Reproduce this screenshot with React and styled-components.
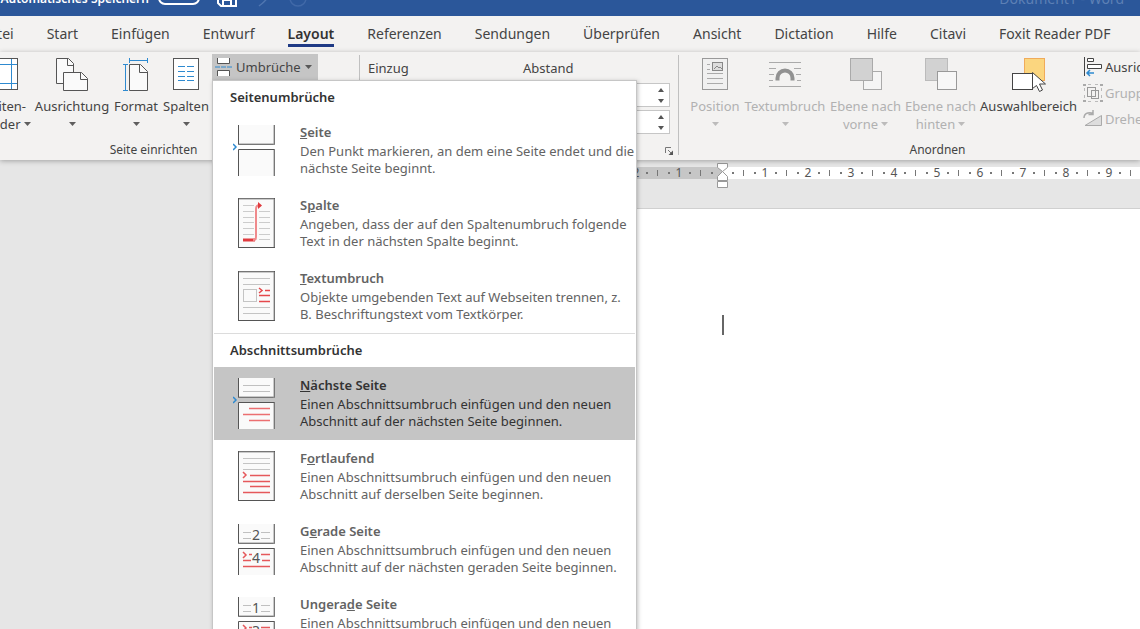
import { useState } from "react";
import styled, { createGlobalStyle } from "styled-components";

const GlobalStyle = createGlobalStyle`
  * {
    box-sizing: border-box;
  }
  body {
    margin: 0;
    font-family: "Noto Sans", "Open Sans", sans-serif;
    font-size: 13px;
    color: #444444;
  }
  button, input {
    font: inherit;
    color: inherit;
  }
`;

const tabs = [
  "Datei",
  "Start",
  "Einfügen",
  "Entwurf",
  "Layout",
  "Referenzen",
  "Sendungen",
  "Überprüfen",
  "Ansicht",
  "Dictation",
  "Hilfe",
  "Citavi",
  "Foxit Reader PDF",
];

// key = index of the underlined access letter
const pageBreaks = [
  {
    name: "Seite",
    key: 0,
    icon: "page",
    text: "Den Punkt markieren, an dem eine Seite endet und die nächste Seite beginnt.",
  },
  {
    name: "Spalte",
    key: 1,
    icon: "column",
    text: "Angeben, dass der auf den Spaltenumbruch folgende Text in der nächsten Spalte beginnt.",
  },
  {
    name: "Textumbruch",
    key: 0,
    icon: "wrap",
    text: "Objekte umgebenden Text auf Webseiten trennen, z. B. Beschriftungstext vom Textkörper.",
  },
];

const sectionBreaks = [
  {
    name: "Nächste Seite",
    key: 0,
    icon: "next",
    text: "Einen Abschnittsumbruch einfügen und den neuen Abschnitt auf der nächsten Seite beginnen.",
  },
  {
    name: "Fortlaufend",
    key: 1,
    icon: "continuous",
    text: "Einen Abschnittsumbruch einfügen und den neuen Abschnitt auf derselben Seite beginnen.",
  },
  {
    name: "Gerade Seite",
    key: 1,
    icon: "even",
    text: "Einen Abschnittsumbruch einfügen und den neuen Abschnitt auf der nächsten geraden Seite beginnen.",
  },
  {
    name: "Ungerade Seite",
    key: 6,
    icon: "odd",
    text: "Einen Abschnittsumbruch einfügen und den neuen Abschnitt auf der nächsten ungeraden Seite beginnen.",
  },
];

/* ---------- icons ---------- */

const Svg = ({ w, h, children }) => (
  <svg width={w} height={h} viewBox={`0 0 ${w} ${h}`} fill="none" aria-hidden="true">
    {children}
  </svg>
);

const Caret = () => (
  <Svg w={7} h={4}>
    <path d="M0 0h7L3.5 4z" fill="currentColor" opacity="0.85" />
  </Svg>
);

const MarginsIcon = () => (
  <Svg w={26} h={32}>
    <rect x="0.5" y="0.5" width="25" height="31" fill="#fff" stroke="#555" />
    <path d="M6.5 1v30M19.5 1v30M1 6.5h24M1 25.5h24" stroke="#2e8ad0" />
  </Svg>
);

const OrientationIcon = () => (
  <Svg w={33} h={33}>
    <path d="M7 25.5H.5V.5h12l5 5V14" fill="#fafafa" stroke="#555" />
    <path d="M11.5 1v6.5h6" stroke="#555" />
    <path d="M7.5 14.5h18l6 6v12h-24z" fill="#fafafa" stroke="#555" />
    <path d="M24.5 15v6.5h7" stroke="#555" />
  </Svg>
);

const SizeIcon = () => (
  <Svg w={26} h={33}>
    <path d="M6.5 2.5h18M6.5 0v5M24.5 0v5M2.5 6.5v26M0 6.5h5M0 32.5h5" stroke="#2e8ad0" />
    <path d="M6.5 6.5h11l7 7v19h-18z" fill="#fafafa" stroke="#555" />
    <path d="M16.5 7v7.500h8" stroke="#555" />
  </Svg>
);

const ColumnsIcon = () => (
  <Svg w={26} h={32}>
    <rect x="0.5" y="0.5" width="25" height="31" fill="#fff" stroke="#555" />
    <path
      d="M5 8.5h7M14 8.5h7M5 13.5h7M14 13.5h7M5 18.5h7M14 18.5h7M5 22.5h7M14 22.5h7"
      stroke="#2e8ad0"
    />
  </Svg>
);

const BreaksIcon = () => (
  <Svg w={17} h={18}>
    <path d="M2.5 0v5.5h12V0M2.5 18v-5.5h12V18" fill="#fff" stroke="#555" />
    <path d="M0 9h5M6 9h5M12 9h5" stroke="#2e8ad0" />
  </Svg>
);

const PositionIcon = () => (
  <Svg w={26} h={32}>
    <rect x="0.5" y="0.5" width="25" height="31" fill="#f0f0f0" stroke="#999" />
    <rect x="10.5" y="4.5" width="10" height="8" fill="#ddd" stroke="#888" />
    <path d="M12 11l3-3 2 2 1-1 2 2" stroke="#888" />
    <path d="M5 6.5h3M5 11.5h3M5 15.5h16M5 20.5h16M5 25.5h16" stroke="#aaa" />
  </Svg>
);

const TextWrapIcon = () => (
  <Svg w={32} h={32}>
    <path
      d="M0 4.5h32M0 10.5h7M25 10.5h7M0 16.5h5M27 16.5h5M0 22.5h4M28 22.5h4M0 28.5h32"
      stroke="#aaa"
    />
    <path d="M8.5 22.5v-2.500a7.500 7.500 0 0 1 15 0v2.500" stroke="#919191" strokeWidth="4" />
  </Svg>
);

const ForwardIcon = () => (
  <Svg w={32} h={32}>
    <rect x="13.5" y="13.5" width="18" height="18" fill="#f5f5f5" stroke="#aaa" />
    <rect x="0.5" y="0.5" width="22" height="22" fill="#d2d2d2" stroke="#aaa" />
  </Svg>
);

const BackwardIcon = () => (
  <Svg w={32} h={32}>
    <rect x="0.5" y="0.5" width="22" height="22" fill="#d2d2d2" stroke="#bbb" />
    <rect x="12.5" y="13.5" width="19" height="18" fill="#f7f7f7" stroke="#999" />
  </Svg>
);

const SelectionIcon = () => (
  <Svg w={34} h={34}>
    <rect x="12.5" y="0.5" width="20" height="22" fill="#fbd67f" stroke="#f0ab5a" />
    <rect x="0.5" y="15.5" width="20" height="16" fill="#fff" stroke="#444" />
    <path d="M20.5 14.5v16l4-3 3 6 3-1.5-3-6h6z" fill="#fff" stroke="#444" />
  </Svg>
);

const AlignIcon = () => (
  <Svg w={20} h={20}>
    <path d="M1.5 0v19" stroke="#444" />
    <path d="M4.5 1.5h6v3h-6zM4.5 7.5h14v4h-14z" fill="#fff" stroke="#444" />
    <path d="M4 16h7M7 13l-3 3 3 3" stroke="#2e8ad0" strokeWidth="1.5" />
  </Svg>
);

const GroupIcon = () => (
  <Svg w={20} h={20}>
    <path d="M5 1.5h3M12 1.5h3M5 18.5h3M12 18.5h3M1.5 5v3M1.5 12v3M18.5 5v3M18.5 12v3" stroke="#bbb" />
    <path d="M0 1h3v2H0zM17 1h3v2h-3zM0 17h3v2H0zM17 17h3v2h-3z" fill="#aaa" />
    <rect x="4.5" y="4.5" width="8" height="9" stroke="#999" />
    <rect x="8.5" y="7.5" width="7" height="8" stroke="#999" />
  </Svg>
);

const RotateIcon = () => (
  <Svg w={20} h={20}>
    <path d="M1 9c0-6 7-6 9-4M10 1v4.5H5.5" stroke="#aaa" strokeWidth="1.5" />
    <path d="M18.5 6.5v10H2z" fill="#ddd" stroke="#aaa" />
  </Svg>
);

const LauncherIcon = () => (
  <Svg w={9} h={9}>
    <path d="M.5 6V.5H6M3 3l4 4" stroke="#777" />
    <path d="M8 3.5V8H3.5z" fill="#555" />
  </Svg>
);

const SaveIcon = () => (
  <Svg w={20} h={18}>
    <path d="M1 1h18v16H4l-3-3zM5 1v6h10V1M6 17v-6h8v6" stroke="#fff" strokeWidth="2" />
  </Svg>
);

const UndoIcon = () => (
  <Svg w={20} h={18}>
    <path d="M4 3c12-4 16 4 2 14" stroke="#5076b0" strokeWidth="1.5" />
  </Svg>
);

const RedoIcon = () => (
  <Svg w={18} h={18}>
    <circle cx="9" cy="9" r="8" stroke="#4169a8" strokeWidth="1.5" />
  </Svg>
);

const IndentMarker = () => (
  <Svg w={11} h={26}>
    <path d="M.5.5h10v4l-5 4-5-4zM.5 17.5v-4l5-5 5 5v4zM.5 18.5h10v6H.5z" fill="#fff" stroke="#999" />
  </Svg>
);

const SplitPages = ({ children }) => (
  <>
    <path d="M5.5 0v19.5h36V0" fill="#fafafa" stroke="#555" />
    <path d="M5.5 51V24.5h36V51" fill="#fafafa" stroke="#555" />
    <path d="M41 0v20M6 19h35M41 25v26" stroke="#999" />
    {children}
  </>
);

const WholePage = ({ children }) => (
  <>
    <rect x="5.5" y="0.5" width="36" height="49" fill="#fafafa" stroke="#555" />
    <path d="M41 1v48M6 1h35" stroke="#999" />
    {children}
  </>
);

const Digit = styled.text`
  font-size: 14px;
  fill: #555555;
  text-anchor: middle;
`;

const breakIcons = {
  page: (
    <SplitPages>
      <path d="M0 19l3 3-3 3" stroke="#2e8ad0" strokeWidth="1.5" />
    </SplitPages>
  ),
  column: (
    <WholePage>
      <path
        d="M10 7.5h11M10 13.5h11M26 13.5h11M10 19.5h11M26 19.5h11M10 24.5h11M26 24.5h11M10 30.5h11M26 30.5h11M10 36.5h11M26 36.5h11M26 41.5h11"
        stroke="#ccc"
      />
      <path d="M10 42h12" stroke="#e03a3e" strokeWidth="3" />
      <path d="M20 42c3 0 3-1 3-4V11c0-3 1-4 4-4" stroke="#ef8a8c" strokeWidth="2" />
      <path d="M25 4l4 3.5-4 3.5z" fill="#e03a3e" />
    </WholePage>
  ),
  wrap: (
    <WholePage>
      <path d="M10 7.5h27M10 13.5h27M10 36.5h27M10 42.5h27" stroke="#c4c4c4" />
      <rect x="10.5" y="18.5" width="13" height="12" stroke="#c4c4c4" />
      <path d="M26 17l3 2.5-3 2.5M32 19.5h5M26 24.5h11M26 30.5h11" stroke="#e5484b" strokeWidth="1.5" />
    </WholePage>
  ),
  next: (
    <SplitPages>
      <path d="M0 19l3 3-3 3" stroke="#2e8ad0" strokeWidth="1.5" />
      <path d="M10 7.5h27M10 13.5h27" stroke="#c0c0c0" />
      <path d="M16 30.5h21M10 36.5h27M16 42.5h21" stroke="#ec6f71" strokeWidth="1.5" />
    </SplitPages>
  ),
  continuous: (
    <WholePage>
      <path d="M10 7.5h27M10 12.5h27M10 18.5h27" stroke="#c4c4c4" />
      <path
        d="M10 21l3 3-3 3M17 24.5h20M10 30.5h27M17 35.5h20M10 41.5h27"
        stroke="#e5585b"
        strokeWidth="1.5"
      />
    </WholePage>
  ),
  even: (
    <SplitPages>
      <path d="M10 8.5h8M28 8.5h9M10 14.5h8M28 14.5h9" stroke="#c0c0c0" />
      <Digit x="23" y="16">2</Digit>
      <path
        d="M10 28l3 3-3 3M16 30.5h3M28 30.5h9M10 36.5h8M29 36.5h8M10 42.5h27"
        stroke="#e5585b"
        strokeWidth="1.5"
      />
      <Digit x="23" y="39">4</Digit>
    </SplitPages>
  ),
  odd: (
    <SplitPages>
      <path d="M10 8.5h8M28 8.5h9M10 14.5h8M28 14.5h9" stroke="#c0c0c0" />
      <Digit x="23" y="16">1</Digit>
      <path
        d="M10 28l3 3-3 3M16 30.5h3M28 30.5h9M10 36.5h8M29 36.5h8M10 42.5h27"
        stroke="#e5585b"
        strokeWidth="1.5"
      />
      <Digit x="23" y="39">3</Digit>
    </SplitPages>
  ),
};

/* ---------- parts ---------- */

const BigButton = ({ icon, lines, arrow = "below", width, disabled }) => (
  <BigButtonBox type="button" $width={width} disabled={disabled}>
    <IconSlot>{icon}</IconSlot>
    {lines.map((line, i) => (
      <Line key={line}>
        {line}
        {arrow === "inline" && i === lines.length - 1 && <Caret />}
      </Line>
    ))}
    {arrow === "below" && (
      <Line>
        <Caret />
      </Line>
    )}
  </BigButtonBox>
);

const BreakItem = ({ item, active, onHover }) => (
  <MenuItem type="button" role="menuitem" $active={active} onMouseEnter={onHover}>
    <Svg w={48} h={51}>
      {breakIcons[item.icon]}
    </Svg>
    <ItemText>
      <ItemName>
        {item.name.slice(0, item.key)}
        <u>{item.name[item.key]}</u>
        {item.name.slice(item.key + 1)}
      </ItemName>
      <ItemHint>{item.text}</ItemHint>
    </ItemText>
  </MenuItem>
);

const Spinner = ({ label }) => (
  <SpinnerBox>
    <input aria-label={label} />
    <SpinnerArrows>
      <button type="button" aria-label={`${label} erhöhen`}>
        <Svg w={6} h={4}>
          <path d="M0 4h6L3 0z" fill="#555" />
        </Svg>
      </button>
      <button type="button" aria-label={`${label} verringern`}>
        <Svg w={6} h={4}>
          <path d="M0 0h6L3 4z" fill="#555" />
        </Svg>
      </button>
    </SpinnerArrows>
  </SpinnerBox>
);

// one centimetre of the ruler: dot, half mark, dot, number
const RulerUnit = ({ number }) => (
  <Unit>
    <Dot />
    <HalfMark />
    <Dot />
    <span>{number}</span>
  </Unit>
);

function App() {
  const [hovered, setHovered] = useState("Nächste Seite");

  return (
    <Window>
      <GlobalStyle />
      <TitleBar>
        <TitleRow>
          <AutoSave>Automatisches Speichern</AutoSave>
          <Toggle type="button" role="switch" aria-checked="false" aria-label="Automatisches Speichern" />
          <QuickAccess>
            <SaveIcon />
            <UndoIcon />
            <RedoIcon />
          </QuickAccess>
          <DocName>Dokument1 - Word</DocName>
        </TitleRow>
      </TitleBar>

      <TabBar>
        {tabs.map((tab) => (
          <Tab key={tab} href="#" $active={tab === "Layout"}>
            {tab}
          </Tab>
        ))}
      </TabBar>

      <Ribbon>
        <SetupGroup>
          <GroupBody>
            <BigButton icon={<MarginsIcon />} lines={["Seiten-", "ränder"]} arrow="inline" width={58} />
            <BigButton icon={<OrientationIcon />} lines={["Ausrichtung"]} width={76} />
            <BigButton icon={<SizeIcon />} lines={["Format"]} width={52} />
            <BigButton icon={<ColumnsIcon />} lines={["Spalten"]} width={48} />
            <MenuAnchor>
              <BreaksButton type="button" aria-haspopup="menu" aria-expanded="true">
                <BreaksIcon />
                Umbrüche
                <Caret />
              </BreaksButton>
              <Menu role="menu">
                <MenuHeading>Seitenumbrüche</MenuHeading>
                {pageBreaks.map((item) => (
                  <BreakItem
                    key={item.name}
                    item={item}
                    active={hovered === item.name}
                    onHover={() => setHovered(item.name)}
                  />
                ))}
                <MenuLine />
                <MenuHeading>Abschnittsumbrüche</MenuHeading>
                {sectionBreaks.map((item) => (
                  <BreakItem
                    key={item.name}
                    item={item}
                    active={hovered === item.name}
                    onHover={() => setHovered(item.name)}
                  />
                ))}
              </Menu>
            </MenuAnchor>
          </GroupBody>
          <GroupLabel>Seite einrichten</GroupLabel>
        </SetupGroup>
        <Divider />

        <ParagraphGroup>
          <Fields>
            <Field>
              <FieldTitle>Einzug</FieldTitle>
            </Field>
            <Field>
              <FieldTitle>Abstand</FieldTitle>
              <Spinner label="Abstand vor" />
              <Spinner label="Abstand nach" />
            </Field>
          </Fields>
          <Launcher type="button" aria-label="Absatzeinstellungen">
            <LauncherIcon />
          </Launcher>
        </ParagraphGroup>
        <Divider />

        <ArrangeGroup>
          <GroupBody>
            <BigButton icon={<PositionIcon />} lines={["Position"]} width={54} disabled />
            <BigButton icon={<TextWrapIcon />} lines={["Textumbruch"]} width={86} disabled />
            <BigButton icon={<ForwardIcon />} lines={["Ebene nach", "vorne"]} arrow="inline" width={75} disabled />
            <BigButton icon={<BackwardIcon />} lines={["Ebene nach", "hinten"]} arrow="inline" width={75} disabled />
            <BigButton icon={<SelectionIcon />} lines={["Auswahlbereich"]} arrow="none" width={101} />
            <SmallButtons>
              <SmallButton type="button">
                <AlignIcon />
                Ausrichten
              </SmallButton>
              <SmallButton type="button" disabled>
                <GroupIcon />
                Gruppieren
              </SmallButton>
              <SmallButton type="button" disabled>
                <RotateIcon />
                Drehen
              </SmallButton>
            </SmallButtons>
          </GroupBody>
          <GroupLabel>Anordnen</GroupLabel>
        </ArrangeGroup>
      </Ribbon>

      <Workspace>
        <Ruler>
          <RulerMargin>
            <RulerUnit number={2} />
            <RulerUnit number={1} />
            <Dot />
            <HalfMark />
            <Dot />
          </RulerMargin>
          <MarkerSlot>
            <IndentMarker />
          </MarkerSlot>
          <RulerScale>
            {Array.from({ length: 16 }, (v, i) => (
              <RulerUnit key={i} number={i + 1} />
            ))}
          </RulerScale>
        </Ruler>
        <Page>
          <TextCursor />
        </Page>
      </Workspace>
    </Window>
  );
}
export default App;

const Window = styled.div`
  display: flex;
  flex-direction: column;
  height: 100vh;
  overflow: hidden;
  background: #e6e6e6;
`;

const TitleBar = styled.header`
  display: flex;
  align-items: flex-end;
  height: 16px;
  flex: none;
  overflow: hidden;
  background: #2b579a;
  color: white;
`;

const TitleRow = styled.div`
  display: flex;
  flex: 1;
  align-items: center;
  height: 36px;
  padding-right: 16px;
`;

const AutoSave = styled.span`
  width: 158px;
  padding-right: 9px;
  display: flex;
  justify-content: flex-end;
  font-size: 12px;
  font-weight: 600;
  white-space: nowrap;
`;

const Toggle = styled.button`
  width: 42px;
  height: 14px;
  border: 2px solid white;
  border-radius: 7px;
  background: transparent;
`;

const QuickAccess = styled.div`
  display: flex;
  gap: 16px;
  margin-left: 17px;
`;

const DocName = styled.span`
  margin-left: auto;
  font-size: 14px;
  color: #5d80b5;
`;

const TabBar = styled.nav`
  display: flex;
  flex: none;
  gap: 33px;
  height: 36px;
  padding-top: 8px;
  margin-left: -21px;
  background: #f3f2f1;
`;

const Tab = styled.a`
  height: 23px;
  line-height: 20px;
  font-size: 14px;
  font-weight: ${(props) => (props.$active ? 600 : 400)};
  color: ${(props) => (props.$active ? "#333333" : "#444444")};
  border-bottom: 3px solid ${(props) => (props.$active ? "#1f3a85" : "transparent")};
  text-decoration: none;
  white-space: nowrap;
`;

const Ribbon = styled.div`
  display: flex;
  flex: none;
  position: relative;
  z-index: 2;
  height: 108px;
  background: #f3f2f1;
  box-shadow: 0 1px 5px rgba(0, 0, 0, 0.3);
`;

const Group = styled.section`
  display: flex;
  flex-direction: column;
  flex: none;
`;

// the first group is scrolled partly out of the window
const SetupGroup = styled(Group)`
  width: 411px;
  margin-left: -52px;
`;

const ParagraphGroup = styled(Group)`
  width: 318px;
  padding: 0 4px 0 8px;
`;

const ArrangeGroup = styled(Group)`
  width: 517px;
`;

const GroupBody = styled.div`
  display: flex;
  height: 89px;
  padding-left: 9px;
  ${SetupGroup} & {
    padding-left: 28px;
  }
`;

const GroupLabel = styled.div`
  font-size: 12px;
  line-height: 18px;
  text-align: center;
`;

const Divider = styled.div`
  flex: none;
  width: 1px;
  margin: 3px 0 5px;
  background: #c0c0c0;
`;

const BigButtonBox = styled.button`
  display: flex;
  flex-direction: column;
  align-items: center;
  flex: none;
  width: ${(props) => props.$width}px;
  padding: 6px 0 0;
  border: none;
  background: transparent;
  white-space: nowrap;
  color: ${(props) => (props.disabled ? "#b1b1b1" : "#444444")};
`;

const IconSlot = styled.span`
  display: flex;
  justify-content: center;
  height: 39px;
`;

const Line = styled.span`
  display: flex;
  align-items: center;
  gap: 3px;
  height: 18px;
  line-height: 18px;
`;

const MenuAnchor = styled.div`
  position: relative;
  margin: 2px 0 0 2px;
`;

const BreaksButton = styled.button`
  display: flex;
  align-items: center;
  gap: 4px;
  height: 26px;
  padding: 0 6px 0 3px;
  border: none;
  background: #c5c5c5;
`;

const Menu = styled.div`
  position: absolute;
  top: 26px;
  left: 0;
  width: 425px;
  padding: 0 1px;
  background: white;
  border: 1px solid #c6c6c6;
  box-shadow: 1px 1px 4px rgba(0, 0, 0, 0.25);
`;

const MenuHeading = styled.div`
  padding-left: 16px;
  line-height: 33px;
  font-weight: 600;
  color: #333333;
`;

const MenuLine = styled.div`
  height: 1px;
  background: #dcdcdc;
`;

const MenuItem = styled.button`
  display: flex;
  gap: 19px;
  width: 100%;
  height: 73px;
  padding: 10px 0 0 19px;
  border: none;
  text-align: left;
  background: ${(props) => (props.$active ? "#c5c5c5" : "transparent")};
  color: ${(props) => (props.$active ? "#333333" : "#636363")};
  svg {
    flex: none;
    margin-top: 1px;
  }
`;

const ItemText = styled.span`
  display: flex;
  flex-direction: column;
  gap: 2px;
  line-height: 17px;
`;

const ItemName = styled.span`
  font-weight: 600;
`;

const ItemHint = styled.span`
  display: block;
`;

const Fields = styled.div`
  display: flex;
  gap: 8px;
  height: 89px;
  padding-right: 4px;
`;

const Field = styled.div`
  display: flex;
  flex-direction: column;
  gap: 3px;
  flex: 1;
  min-width: 0;
`;

const FieldTitle = styled.div`
  padding-top: 7px;
  height: 28px;
  line-height: 18px;
`;

const SpinnerBox = styled.div`
  display: flex;
  height: 24px;
  border: 1px solid #c6c6c6;
  background: white;
  input {
    flex: 1;
    min-width: 0;
    border: none;
    outline: none;
  }
`;

const SpinnerArrows = styled.div`
  display: flex;
  flex-direction: column;
  width: 17px;
  button {
    display: flex;
    align-items: center;
    justify-content: center;
    flex: 1;
    padding: 0;
    border: none;
    background: transparent;
  }
`;

const Launcher = styled.button`
  display: flex;
  align-self: flex-end;
  margin-top: 6px;
  padding: 0;
  border: none;
  background: transparent;
`;

const SmallButtons = styled.div`
  display: flex;
  flex-direction: column;
  padding: 2px 0 0 4px;
`;

const SmallButton = styled.button`
  display: flex;
  align-items: center;
  gap: 2px;
  height: 26px;
  padding: 0;
  border: none;
  background: transparent;
  color: ${(props) => (props.disabled ? "#b1b1b1" : "#444444")};
`;

const Workspace = styled.main`
  display: flex;
  flex-direction: column;
  flex: 1;
  padding: 7px 0 0 615px;
`;

const Ruler = styled.div`
  display: flex;
  height: 12px;
  margin-bottom: 29px;
  line-height: 12px;
  font-size: 12px;
  color: #555555;
  background: white;
`;

const RulerMargin = styled.div`
  display: flex;
  flex: none;
  justify-content: flex-end;
  width: 107px;
  padding-right: 5px;
  overflow: hidden;
  background: #c6c6c6;
`;

const RulerScale = styled.div`
  display: flex;
  flex: 1;
  min-width: 0;
  padding-left: 5px;
  overflow: hidden;
`;

const Unit = styled.div`
  display: flex;
  flex: none;
  width: 43px;
  span {
    width: 10px;
    text-align: center;
  }
`;

const Dot = styled.i`
  flex: none;
  width: 11px;
  background: linear-gradient(#777777, #777777) center / 2px 2px no-repeat;
`;

const HalfMark = styled.b`
  flex: none;
  width: 11px;
  background: linear-gradient(#777777, #777777) center / 1px 6px no-repeat;
`;

// indent handle sits over the seam between margin and text area
const MarkerSlot = styled.div`
  position: relative;
  width: 0;
  svg {
    position: absolute;
    top: -4px;
    left: -5px;
  }
`;

const Page = styled.div`
  flex: 1;
  padding: 106px 0 0 107px;
  background: white;
  border-top: 1px solid #d0d0d0;
`;

const TextCursor = styled.div`
  width: 2px;
  height: 20px;
  background: #666666;
`;
